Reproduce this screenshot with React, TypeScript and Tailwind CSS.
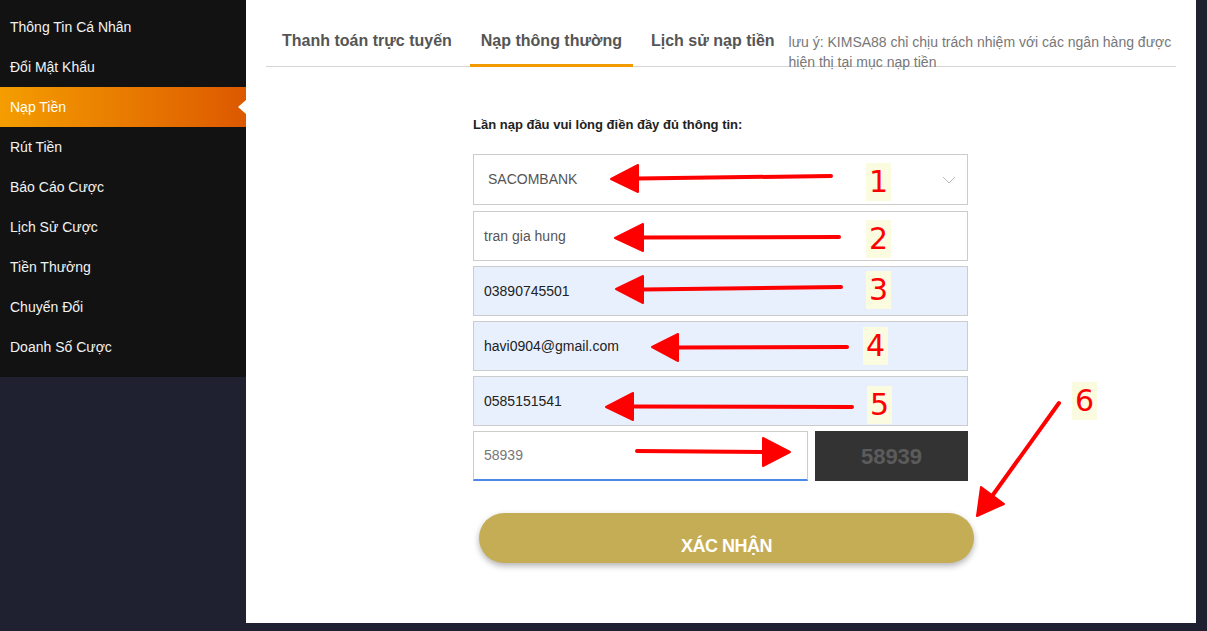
import React from "react";

const menu = [
  "Thông Tin Cá Nhân",
  "Đổi Mật Khẩu",
  "Nạp Tiền",
  "Rút Tiền",
  "Báo Cáo Cược",
  "Lịch Sử Cược",
  "Tiền Thưởng",
  "Chuyển Đổi",
  "Doanh Số Cược",
];

const tabs = ["Thanh toán trực tuyến", "Nạp thông thường", "Lịch sử nạp tiền"];

// annotation arrows drawn on top of the screenshot
type Arrow = { tail: [number, number]; tip: [number, number]; a: [number, number]; b: [number, number] };

const arrows: Arrow[] = [
  { tail: [831, 176], tip: [611, 179], a: [638, 165], b: [638, 192] },
  { tail: [839, 237], tip: [615, 238], a: [643, 224], b: [643, 251] },
  { tail: [841, 287], tip: [616, 289], a: [643, 276], b: [643, 303] },
  { tail: [847, 347], tip: [652, 347], a: [678, 334], b: [678, 361] },
  { tail: [852, 407], tip: [606, 407], a: [633, 393], b: [633, 420] },
  { tail: [637, 451], tip: [790, 452], a: [763, 438], b: [763, 466] },
  { tail: [1059, 403], tip: [977, 516], a: [981, 487], b: [1004, 504] },
];

const labels = [
  { n: "1", x: 866, y: 163 },
  { n: "2", x: 866, y: 220 },
  { n: "3", x: 866, y: 271 },
  { n: "4", x: 863, y: 327 },
  { n: "5", x: 867, y: 386 },
  { n: "6", x: 1072, y: 382 },
];

function Sidebar() {
  return (
    <div className="w-[246px] shrink-0">
      <div className="bg-[#121212] pt-[7px] pb-[10px]">
        {menu.map((m) => {
          const active = m === "Nạp Tiền";
          return (
            <div
              key={m}
              className={
                active
                  ? "relative h-[40px] pl-[10px] flex items-center text-[14px] text-white bg-gradient-to-r from-[#f49d00] to-[#dc5800]"
                  : "h-[40px] pl-[10px] flex items-center text-[14px] text-[#f2f2f2]"
              }
            >
              {m}
              {active ? (
                <span className="absolute right-0 top-[13px] w-0 h-0 border-y-[7px] border-y-transparent border-r-[8px] border-r-white" />
              ) : null}
            </div>
          );
        })}
      </div>
    </div>
  );
}

function Field({ value, filled, muted }: { value: string; filled?: boolean; muted?: boolean }) {
  return (
    <div
      className={`h-[50px] border border-[#cccccc] flex items-center pl-[10px] text-[14px] ${
        filled ? "bg-[#e8f0fe] text-[#222]" : "bg-white"
      } ${muted ? "text-[#555]" : ""}`}
    >
      {value}
    </div>
  );
}

function DepositForm() {
  return (
    <div className="w-[495px] ml-[227px] mt-[49px]">
      <div className="text-[13px] font-bold text-[#222] leading-[18px]">
        Lần nạp đầu vui lòng điền đầy đủ thông tin:
      </div>

      <div className="mt-[20px] h-[51px] border border-[#cccccc] flex items-center justify-between pl-[14px] pr-[10px] text-[14px] text-[#555]">
        <span>SACOMBANK</span>
        <svg width="14" height="8" viewBox="0 0 14 8" className="mr-[1px]">
          <path d="M1 1 L7 7 L13 1" fill="none" stroke="#bbbbbb" strokeWidth="1" />
        </svg>
      </div>

      <div className="mt-[6px] flex flex-col gap-[5px]">
        <Field value="tran gia hung" muted />
        <Field value="03890745501" filled />
        <Field value="havi0904@gmail.com" filled />
        <Field value="0585151541" filled />
        <div className="flex gap-[7px]">
          <div className="w-[335px] h-[50px] border border-[#cccccc] border-b-2 border-b-[#4a89e8] flex items-center pl-[10px] text-[14px] text-[#777]">
            58939
          </div>
          <div className="flex-1 h-[50px] bg-[#333333] flex items-center justify-center text-[22px] font-bold text-[#5b5b5b]">
            58939
          </div>
        </div>
      </div>

      <button
        type="button"
        className="mt-[32px] ml-[6px] w-[495px] h-[50px] rounded-full bg-[#c5ad55] shadow-[0_3px_6px_rgba(0,0,0,0.3)] pt-[16px] flex items-center justify-center text-[18px] font-bold text-white tracking-[-0.5px]"
      >
        XÁC NHẬN
      </button>
    </div>
  );
}

function Overlay() {
  return (
    <>
      <svg className="absolute inset-0 pointer-events-none" width="1207" height="631" viewBox="0 0 1207 631">
        {arrows.map((ar, i) => {
          const mx = (ar.a[0] + ar.b[0]) / 2;
          const my = (ar.a[1] + ar.b[1]) / 2;
          return (
            <g key={i}>
              <line
                x1={ar.tail[0]}
                y1={ar.tail[1]}
                x2={mx}
                y2={my}
                stroke="#ff0000"
                strokeWidth="4"
                strokeLinecap="round"
              />
              <polygon
                points={`${ar.tip[0]},${ar.tip[1]} ${ar.a[0]},${ar.a[1]} ${ar.b[0]},${ar.b[1]}`}
                fill="#ff0000"
                stroke="#ff0000"
                strokeWidth="2"
                strokeLinejoin="round"
              />
            </g>
          );
        })}
      </svg>
      {labels.map((l) => (
        <div
          key={l.n}
          className="absolute w-[25px] h-[38px] bg-[#fbfbe0] flex items-center justify-center text-[30px] leading-none text-[#ff0000]"
          style={{ left: l.x, top: l.y, fontFamily: '"DejaVu Sans", sans-serif' }}
        >
          {l.n}
        </div>
      ))}
    </>
  );
}

export default function App() {
  return (
    <div
      className="relative w-[1207px] h-[631px] bg-[#1f2130] flex overflow-hidden"
      style={{ fontFamily: '"Liberation Sans", Arial, sans-serif' }}
    >
      <Sidebar />
      <div className="w-[950px] h-[623px] bg-white">
        <div className="mx-[20px] h-[67px] border-b border-[#d4d4d4] flex items-end">
          <div className="flex gap-[7px] ml-[5px]">
            {tabs.map((t) => {
              const active = t === "Nạp thông thường";
              return (
                <div
                  key={t}
                  className={`h-[53px] -mb-px pt-[4px] px-[11px] flex items-center text-[16px] font-bold text-[#555] border-b-[3px] ${
                    active ? "border-b-[#f29b00]" : "border-b-transparent"
                  }`}
                >
                  {t}
                </div>
              );
            })}
          </div>
          <div className="self-start mt-[32px] ml-[3px] text-[14px] leading-[20px] text-[#777] whitespace-nowrap">
            lưu ý: KIMSA88 chỉ chịu trách nhiệm với các ngân hàng được
            <br />
            hiện thị tại mục nạp tiền
          </div>
        </div>
        <DepositForm />
      </div>
      <Overlay />
    </div>
  );
}
